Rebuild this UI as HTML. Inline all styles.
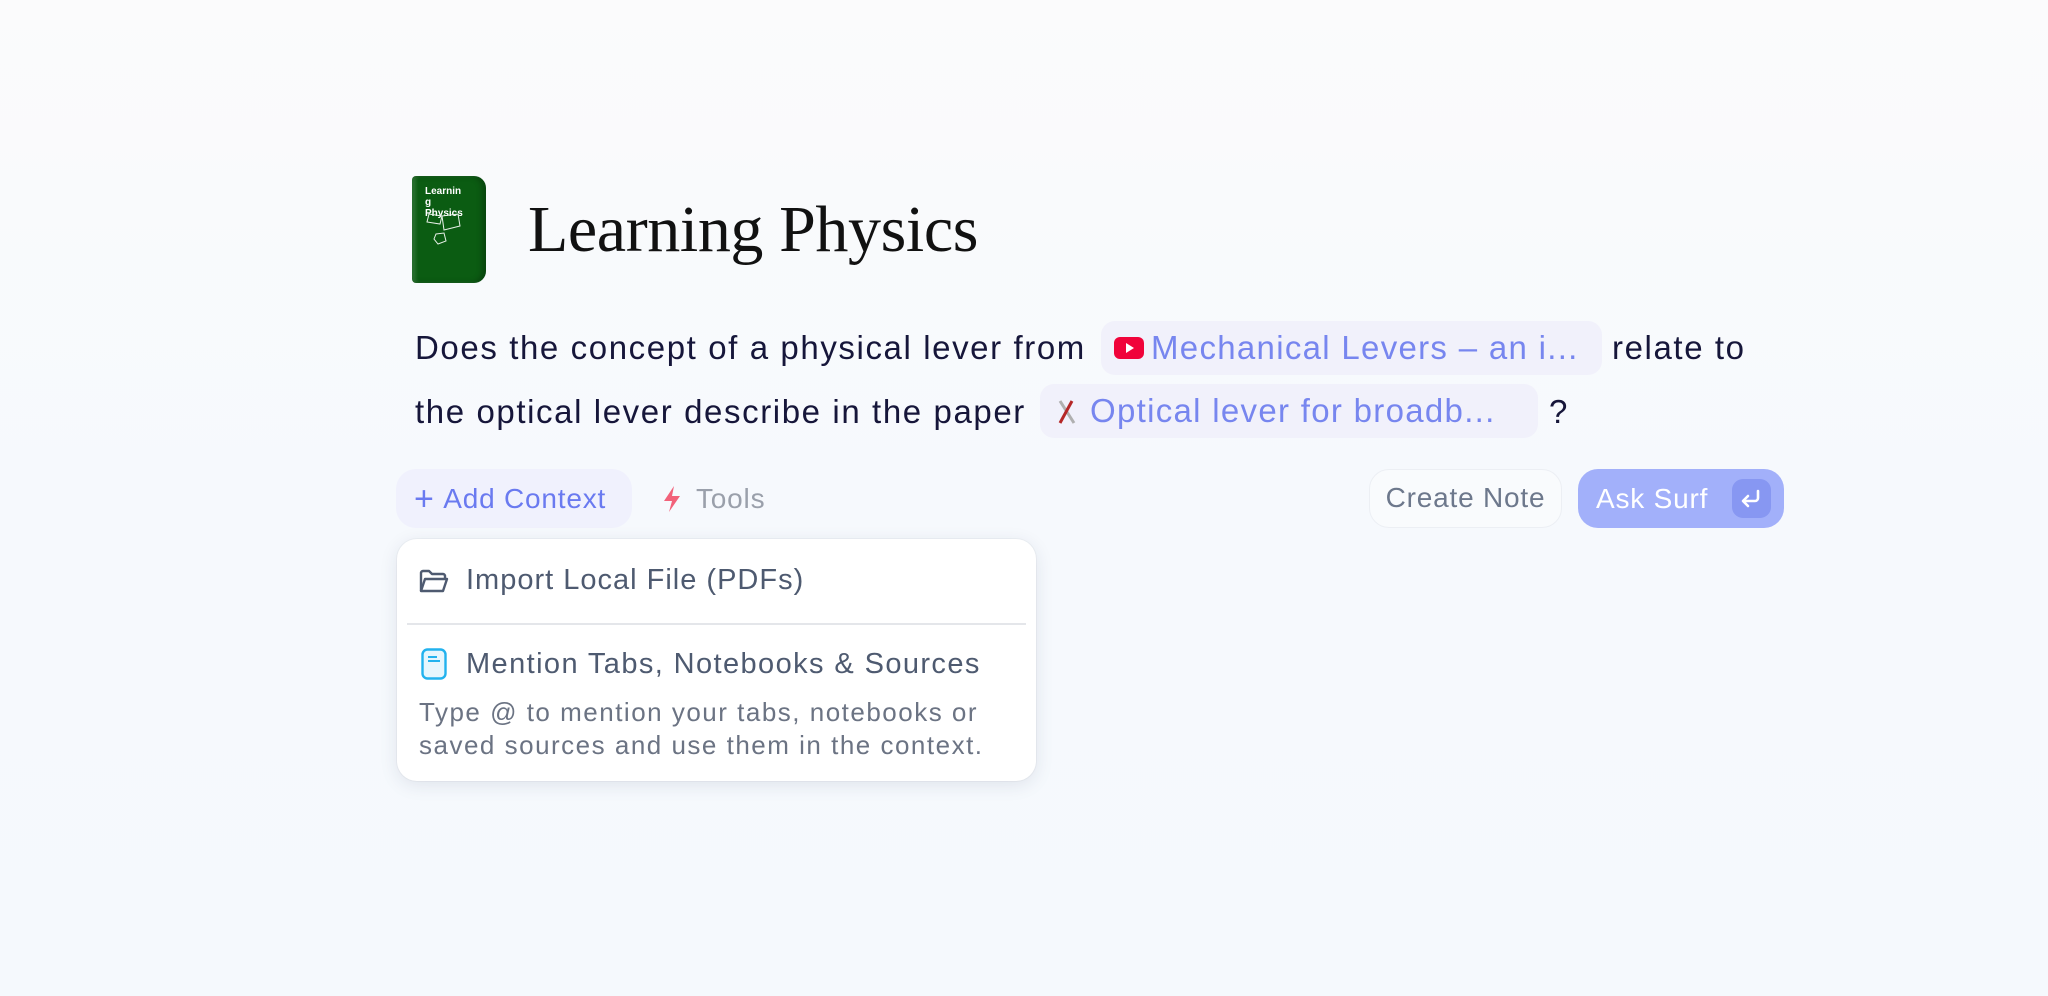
<!DOCTYPE html>
<html><head><meta charset="utf-8"><style>
*{margin:0;padding:0;box-sizing:border-box}
body{width:2048px;height:996px;overflow:hidden;background:linear-gradient(180deg,#fbfbfc 0%,#f6f9fd 50%,#f5f9fd 100%);font-family:"Liberation Sans",sans-serif;position:relative}
.abs{position:absolute;white-space:nowrap}
.book{left:412px;top:176px;width:74px;height:107px;background:#0b5c12;border-radius:4px 12px 12px 4px;box-shadow:inset -4px 0 6px rgba(0,0,0,.25),inset 4px 0 3px rgba(255,255,255,.12)}
.title{left:528px;top:190px;font-family:"Liberation Serif",serif;font-size:66px;color:#111;letter-spacing:-0.4px;line-height:80px}
.q{font-size:33px;color:#16163a;line-height:44px;letter-spacing:1.6px}
.chip{background:#f1f1fb;border-radius:14px;height:54px;color:#7786ef;font-size:33px;line-height:54px;padding-left:50px;letter-spacing:1.3px}
.btn{border-radius:20px;height:59px;line-height:59px;font-size:28px;letter-spacing:0.8px}
.menu{left:397px;top:539px;width:639px;height:242px;background:#fff;border-radius:20px;box-shadow:0 4px 18px rgba(30,40,80,.10),0 0 0 1px rgba(0,0,0,.03)}
.mi{font-size:29px;color:#4e5a70}
.desc{font-size:26px;color:#6b7383;line-height:33px;letter-spacing:1.5px}
</style></head><body>
<div class="abs book">
<div style="position:absolute;left:13px;top:10px;color:#fff;font-size:10px;line-height:11px;font-weight:bold">Learnin<br>g<br>Physics</div>
<svg style="position:absolute;left:12px;top:36px" width="50" height="50" viewBox="0 0 50 50" fill="none" stroke="#e8f0e8" stroke-width="1"><path d="M5 2 L18 4 L16 12 L3 10Z"/><path d="M18 4 L34 2 L36 14 L20 18 Z"/><path d="M12 22 L20 21 L22 29 L14 32 L10 27Z"/></svg>
</div>
<div class="abs title">Learning Physics</div>

<div class="abs q" style="left:415px;top:326px">Does the concept of a physical lever from</div>
<div class="abs chip" style="left:1101px;top:321px;width:501px"><span>Mechanical Levers – an i...</span>
<svg style="position:absolute;left:13px;top:16px" width="30" height="22" viewBox="0 0 30 22"><rect width="30" height="22" rx="6" fill="#f0033a"/><path d="M12 6 L20 11 L12 16Z" fill="#fff"/></svg></div>
<div class="abs q" style="left:1612px;top:326px">relate to</div>

<div class="abs q" style="left:415px;top:390px">the optical lever describe in the paper</div>
<div class="abs chip" style="left:1040px;top:384px;width:498px"><span>Optical lever for broadb...</span>
<svg style="position:absolute;left:14px;top:14px" width="26" height="28" viewBox="0 0 26 28"><path d="M6 3 L20 25" stroke="#b0b0b0" stroke-width="3"/><path d="M18 3 L6 25" stroke="#b52727" stroke-width="3"/></svg></div>
<div class="abs q" style="left:1549px;top:390px">?</div>

<div class="abs btn" style="left:396px;top:469px;width:236px;background:#f0f1fd;color:#6a7af0;padding-left:18px"><span style="font-size:34px;vertical-align:-2px">+</span>&nbsp;Add Context</div>
<svg class="abs" style="left:661px;top:485px" width="22" height="28" viewBox="0 0 22 28"><path d="M13 1 L3 16 L11 16 L8 27 L19 11 L11 11Z" fill="#f2627a"/></svg>
<div class="abs btn" style="left:696px;top:469px;color:#9aa0ab">Tools</div>

<div class="abs btn" style="left:1369px;top:469px;width:193px;border:1.5px solid #eceff4;background:#f9fbfd;color:#6d788c;text-align:center;line-height:56px">Create Note</div>
<div class="abs btn" style="left:1578px;top:469px;width:206px;background:#a2b0fa;color:#fff;padding-left:18px">Ask Surf
<div style="position:absolute;left:154px;top:10px;width:39px;height:39px;border-radius:11px;background:#8797f2"><svg width="39" height="39" viewBox="0 0 39 39" fill="none" stroke="#fff" stroke-width="2.6" stroke-linecap="round" stroke-linejoin="round"><path d="M26 12 V19 a3 3 0 0 1 -3 3 H12"/><path d="M16 17 L11 22 L16 27"/></svg></div></div>

<div class="abs menu">
<svg style="position:absolute;left:22px;top:30px" width="30" height="26" viewBox="0 0 30 26" fill="none" stroke="#4e5a70" stroke-width="2.4" stroke-linejoin="round"><path d="M2 22 V4 a2 2 0 0 1 2-2 H10 L13 5 H24 a2 2 0 0 1 2 2 V9"/><path d="M2 22 L6 10 H28 L24 22 Z"/></svg>
<div class="abs mi" style="left:69px;top:25px;letter-spacing:1px">Import Local File (PDFs)</div>
<div style="position:absolute;left:10px;top:84px;width:619px;height:2px;background:#e4e6ea"></div>
<svg style="position:absolute;left:24px;top:109px" width="26" height="32" viewBox="0 0 26 32"><rect x="1.5" y="1.5" width="23" height="29" rx="5" fill="#e6f6fd" stroke="#22b2ee" stroke-width="2.4"/><path d="M7 9 H16 M7 13 H19" stroke="#22b2ee" stroke-width="2"/></svg>
<div class="abs mi" style="left:69px;top:109px;letter-spacing:1.4px">Mention Tabs, Notebooks &amp; Sources</div>
<div class="abs desc" style="left:22px;top:157px">Type @ to mention your tabs, notebooks or<br>saved sources and use them in the context.</div>
</div>
</body></html>
